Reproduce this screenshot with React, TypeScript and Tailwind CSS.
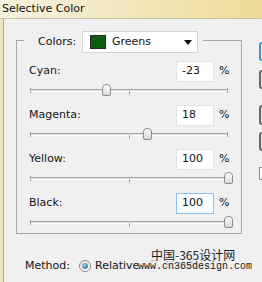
import React from "react";

type Row = { label: string; value: number; focused?: boolean };

const rows: Row[] = [
  { label: "Cyan:", value: -23 },
  { label: "Magenta:", value: 18 },
  { label: "Yellow:", value: 100 },
  { label: "Black:", value: 100, focused: true },
];

function Slider({ value }: { value: number }) {
  // track is 198px wide, range -100..100
  const x = ((value + 100) / 200) * 198;
  return (
    <div className="relative mt-[2px] ml-[1px] h-[12px] w-[198px]">
      <div className="absolute left-0 right-0 top-[5px] h-[3px] border-t border-[#a3a3a3] border-b border-b-white bg-[#e4e4e4]" />
      <div className="absolute left-0 top-[4px] h-[5px] w-px bg-[#a3a3a3]" />
      <div className="absolute right-0 top-[4px] h-[5px] w-px bg-[#a3a3a3]" />
      <div className="absolute left-[99px] top-[7px] h-[4px] w-px bg-[#a3a3a3]" />
      <div
        className="absolute top-0 h-[12px] w-[9px] rounded-t-[4px] rounded-b-[2px] border border-[#8c8c8c] bg-gradient-to-b from-white to-[#d9d9d9]"
        style={{ left: x - 4 }}
      />
    </div>
  );
}

function Radio({ on }: { on?: boolean }) {
  return (
    <div className="flex h-[12px] w-[12px] items-center justify-center rounded-full border border-[#8a8a8a] bg-gradient-to-b from-[#e6e6e6] to-white">
      {on && <div className="h-[6px] w-[6px] rounded-full bg-[radial-gradient(circle_at_40%_35%,#9fd0ee,#1d5c8c)]" />}
    </div>
  );
}

export default function App() {
  return (
    <div className="relative flex h-[282px] w-[262px] flex-col overflow-hidden bg-[#f0f0f0] font-['DejaVu_Sans',sans-serif] text-[11px] text-[#141414]">
      <div className="flex h-[18px] items-center bg-gradient-to-r from-[#f7f2e1] to-[#eedb97] pl-[2px] text-[11px] text-[#111]">
        Selective Color
      </div>
      <div className="h-px bg-[#c9c2a8]" />

      <div className="flex min-h-0 flex-1">
        <div className="w-[3px] shrink-0 border-r border-[#a8a8a8] bg-[#efe5c4] box-content" />

        <div className="w-[255px] shrink-0 pl-[12px] pt-[21px]">
          <div className="w-[226px] border border-[#a6a6a6] pb-[5px]">
            <div className="-mt-[10px] ml-[7px] flex w-fit items-center bg-[#f0f0f0] pl-[14px] pr-[5px]">
              <span className="w-[44px]">Colors:</span>
              <div className="flex h-[22px] w-[116px] items-center border border-[#d4d4d4] bg-white pl-[7px] pr-[3px]">
                <div className="h-[14px] w-[16px] border border-[#2a2a2a] bg-[#0d5c10]" />
                <span className="ml-[6px] flex-1">Greens</span>
                <svg width="8" height="5" viewBox="0 0 8 5" className="mr-[2px]">
                  <path d="M0 0h8L4 5z" fill="#111" />
                </svg>
              </div>
            </div>

            <div className="pl-[12px] pt-[8px]">
              {rows.map((r, i) => (
                <div key={r.label} className={i < rows.length - 1 ? "mb-[9px]" : ""}>
                  <div className="flex h-[21px] items-center">
                    <span className="w-[147px]">{r.label}</span>
                    <div
                      className={
                        "flex h-[21px] w-[38px] items-center pl-[5px] " +
                        (r.focused
                          ? "border border-[#8fc0e8] bg-[#f7fdff]"
                          : "border border-[#e2e2e2] bg-white")
                      }
                    >
                      {r.value}
                    </div>
                    <span className="ml-[5px]">%</span>
                  </div>
                  <Slider value={r.value} />
                </div>
              ))}
            </div>
          </div>

          <div className="mt-[25px] flex h-[14px] items-center pl-[9px]">
            <span className="w-[54px]">Method:</span>
            <Radio on />
            <span className="ml-[4px]">Relative</span>
            <div className="ml-[8px] opacity-40">
              <Radio />
            </div>
            <span className="ml-[4px] text-[#b0b0b0]">Absolute</span>
          </div>
        </div>

        <div className="flex w-[75px] shrink-0 flex-col">
          <div className="mt-[23px] h-[19px] rounded-[3px] border-2 border-[#3a9fc4] bg-[#d6edf7]" />
          <div className="mt-[9px] h-[19px] rounded-[3px] border-2 border-[#6a6a6a] bg-[#e6e6e6]" />
          <div className="mt-[16px] h-[20px] rounded-[3px] border-2 border-[#6a6a6a] bg-[#e6e6e6]" />
          <div className="mt-[7px] h-[19px] rounded-[3px] border-2 border-[#6a6a6a] bg-[#e6e6e6]" />
          <div className="mt-[16px] h-[13px] w-[13px] border border-[#8e8f8f] bg-white" />
        </div>
      </div>

      <div className="absolute left-[150px] top-[249px] flex flex-col items-start leading-none">
        <span className="pl-[1px] font-['Noto_Sans_CJK_SC',sans-serif] text-[12px] text-[#1a1a1a]">中国-365设计网</span>
        <span className="-ml-[12px] mt-[1px] bg-[#f0f0f0]/70 font-['Liberation_Mono',monospace] text-[10px] text-[#1a1a1a]">
          www.cn365design.com
        </span>
      </div>
    </div>
  );
}
